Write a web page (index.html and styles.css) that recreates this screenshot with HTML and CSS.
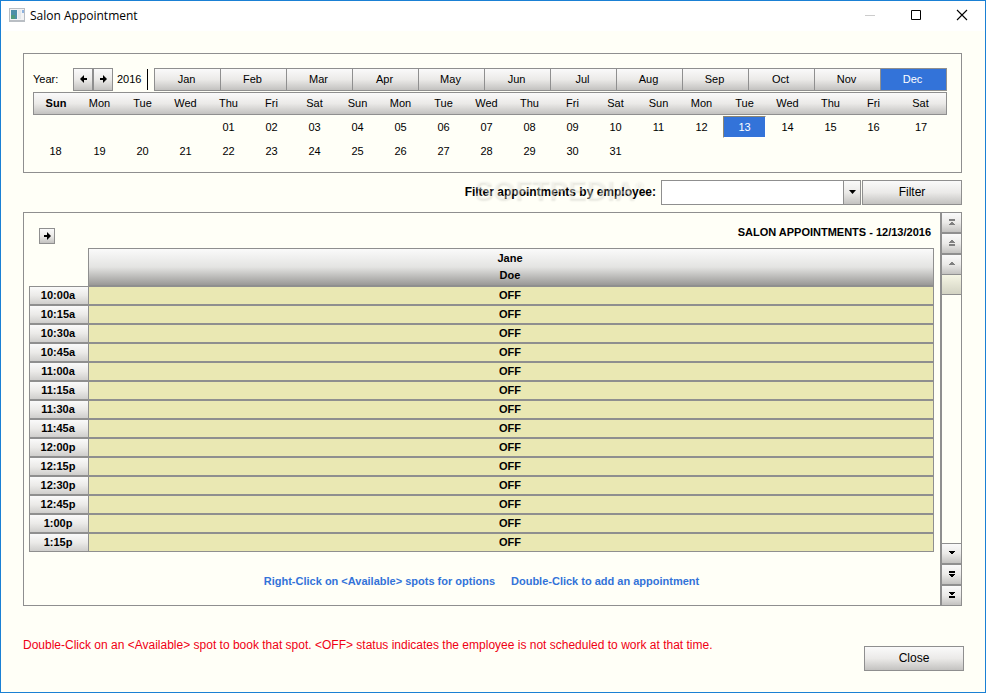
FILE: index.html
```html
<!DOCTYPE html>
<html lang="en">
<head>
  <meta charset="UTF-8">
  <meta name="viewport" content="width=device-width, initial-scale=1.0">
  <title>Salon Appointment</title>
  <link rel="stylesheet" href="styles.css">
</head>
<body>
<div class="window">

  <header class="titlebar">
    <svg class="app-icon" width="16" height="14" viewBox="0 0 16 14" shape-rendering="crispEdges">
      <rect width="16" height="14" fill="#b9bec4"/>
      <rect x="1" y="1" width="14" height="11" fill="#f2f3f5"/>
      <rect x="2" y="2" width="6" height="9" fill="#4d8fa8"/>
      <rect x="2" y="7" width="4" height="4" fill="#4f9a7c"/>
      <rect x="9" y="2" width="3" height="9" fill="#e4e8ec"/>
      <rect x="13" y="2" width="2" height="3" fill="#8fb3e0"/>
    </svg>
    <h1>Salon Appointment</h1>
    <div class="window-buttons">
      <button type="button" aria-label="Minimize" disabled>
        <svg width="12" height="12" viewBox="0 0 12 12"><path d="M1 6.500h10" stroke="#ccc"/></svg>
      </button>
      <button type="button" aria-label="Maximize">
        <svg width="12" height="12" viewBox="0 0 12 12"><path d="M1.500 1.500h9v9h-9z" fill="none" stroke="#000"/></svg>
      </button>
      <button type="button" aria-label="Close window">
        <svg width="12" height="12" viewBox="0 0 12 12"><path d="M1 1l10 10M11 1L1 11" stroke="#000" stroke-width="1.100"/></svg>
      </button>
    </div>
  </header>

  <main class="content">

    <section class="calendar">
      <div class="calendar-top">
        <span class="year-label">Year:</span>
        <div class="year-nav">
          <button type="button" aria-label="Previous year"><svg width="7" height="8" viewBox="0 0 7 8"><path d="M0 4L4 0v3h3v2H4v3z"/></svg></button>
          <button type="button" aria-label="Next year"><svg width="7" height="8" viewBox="0 0 7 8"><path d="M7 4L3 0v3H0v2h3v3z"/></svg></button>
        </div>
        <span class="year">2016</span>
        <div class="months">
          <button type="button">Jan</button>
          <button type="button">Feb</button>
          <button type="button">Mar</button>
          <button type="button">Apr</button>
          <button type="button">May</button>
          <button type="button">Jun</button>
          <button type="button">Jul</button>
          <button type="button">Aug</button>
          <button type="button">Sep</button>
          <button type="button">Oct</button>
          <button type="button">Nov</button>
          <button type="button" class="selected">Dec</button>
        </div>
      </div>

      <table class="days">
        <colgroup><col class="col-first"><col span="19" class="col-day"><col class="col-last"></colgroup>
        <thead><tr id="weekdays"></tr></thead>
        <tbody id="days"></tbody>
      </table>
    </section>

    <form class="filter">
      <label for="employee">Filter appointments by employee:</label>
      <span class="watermark" aria-hidden="true">SOFTPEDIA<sup>®</sup></span>
      <div class="select-box">
        <select id="employee"><option></option></select>
        <span class="select-arrow"><svg width="7" height="4" viewBox="0 0 7 4"><path d="M0 0h7L3.500 4z"/></svg></span>
      </div>
      <button type="button">Filter</button>
    </form>

    <section class="schedule">
      <div class="schedule-body">
        <div class="schedule-top">
          <button type="button" aria-label="Next employees"><svg width="7" height="8" viewBox="0 0 7 8"><path d="M7 4L3 0v3H0v2h3v3z"/></svg></button>
          <h2>SALON APPOINTMENTS - 12/13/2016</h2>
        </div>
        <table class="slots">
          <colgroup><col class="col-time"><col></colgroup>
          <thead><tr><td></td><th scope="col">Jane<br>Doe</th></tr></thead>
          <tbody id="slots"></tbody>
        </table>
        <p class="hints"><span>Right-Click on &lt;Available&gt; spots for options</span><span>Double-Click to add an appointment</span></p>
      </div>

      <div class="scrollbar">
        <button type="button" aria-label="Scroll to top" disabled><svg width="6" height="6" viewBox="0 0 6 6"><path d="M0 0h6v2H0zM2 3h2v1h1v1h1v1H0V5h1V4h1z"/></svg></button>
        <button type="button" aria-label="Page up" disabled><svg width="6" height="6" viewBox="0 0 6 6"><path d="M2 0h2v1h1v1h1v1H0V2h1V1h1zM0 4h6v2H0z"/></svg></button>
        <button type="button" aria-label="Scroll up" disabled><svg width="6" height="3" viewBox="0 0 6 3"><path d="M2 0h2v1h1v1h1v1H0V2h1V1h1z"/></svg></button>
        <div class="track"><div class="thumb"></div></div>
        <button type="button" aria-label="Scroll down"><svg width="6" height="3" viewBox="0 0 6 3"><path d="M0 0h6v1H5v1H4v1H2V2H1V1H0z"/></svg></button>
        <button type="button" aria-label="Page down"><svg width="6" height="6" viewBox="0 0 6 6"><path d="M0 0h6v2H0zM0 3h6v1H5v1H4v1H2V5H1V4H0z"/></svg></button>
        <button type="button" aria-label="Scroll to bottom"><svg width="6" height="6" viewBox="0 0 6 6"><path d="M0 0h6v1H5v1H4v1H2V2H1V1H0zM0 4h6v2H0z"/></svg></button>
      </div>
    </section>

    <footer class="footer">
      <p>Double-Click on an &lt;Available&gt; spot to book that spot. &lt;OFF&gt; status indicates the employee is not scheduled to work at that time.</p>
      <button type="button">Close</button>
    </footer>

  </main>
</div>

<script>
  const weekdays = ['Sun', 'Mon', 'Tue', 'Wed', 'Thu', 'Fri', 'Sat'];
  const columns = 21;
  const firstDay = 4; // Dec 2016 starts on a Thursday
  const selectedDay = 13;

  let head = '';
  for (let i = 0; i < columns; i++) {
    head += '<th scope="col">' + weekdays[i % 7] + '</th>';
  }
  document.getElementById('weekdays').innerHTML = head;

  let days = '';
  for (let i = 0; i < columns * 2; i++) {
    const day = i - firstDay + 1;
    if (i % columns === 0) days += '<tr>';
    if (day < 1 || day > 31) {
      days += '<td></td>';
    } else {
      const cls = day === selectedDay ? ' class="selected"' : '';
      days += '<td><button type="button"' + cls + '>' + String(day).padStart(2, '0') + '</button></td>';
    }
    if (i % columns === columns - 1) days += '</tr>';
  }
  document.getElementById('days').innerHTML = days;

  // 15 minute slots, 10:00a to 1:15p
  let slots = '';
  for (let t = 600; t <= 795; t += 15) {
    const hour = Math.floor(t / 60);
    const label = (hour > 12 ? hour - 12 : hour) + ':' + String(t % 60).padStart(2, '0') + (hour < 12 ? 'a' : 'p');
    slots += '<tr><th scope="row">' + label + '</th><td>OFF</td></tr>';
  }
  document.getElementById('slots').innerHTML = slots;
</script>
</body>
</html>
```
FILE: styles.css
```css
* {
  box-sizing: border-box;
}
body {
  margin: 0;
  background-color: #fffff7;
  color: #000;
  font-family: "Liberation Sans", Arial, sans-serif;
  font-size: 11px;
}
button {
  padding: 0 0 2px;
  border: 1px solid #8f8f8f;
  background: linear-gradient(#fafafa, #ebeae8 50%, #c3c2c0);
  color: #000;
  font-family: inherit;
  font-size: 11px;
}
svg {
  display: block;
  margin: auto;
}
h1, h2, p {
  margin: 0;
}
table {
  width: 100%;
  table-layout: fixed;
  border-collapse: separate;
  border-spacing: 0;
}
th, td {
  padding: 0;
  text-align: center;
}

.window {
  display: flex;
  flex-direction: column;
  min-height: 100vh;
  border: 1px solid #1a80d4;
}

/* title bar */
.titlebar {
  display: flex;
  align-items: center;
  height: 30px;
  padding: 0 0 2px 8px;
  background-color: #fff;
}
.app-icon {
  margin: 0 5px 0 0;
}
.titlebar h1 {
  flex: 1;
  font-family: "Open Sans", "Noto Sans", sans-serif;
  font-size: 12px;
  font-weight: normal;
}
.window-buttons {
  display: flex;
}
.window-buttons button {
  width: 46px;
  height: 28px;
  padding: 0;
  border: 0;
  background: none;
}

.content {
  display: flex;
  flex: 1;
  flex-direction: column;
  padding: 22px 0 21px;
}

/* calendar */
.calendar {
  height: 120px;
  margin: 0 23px 0 22px;
  padding: 14px 14px 0 9px;
  border: 1px solid #8f8f8f;
}
.calendar-top {
  display: flex;
  align-items: center;
  margin-bottom: 1px;
}
.year-label {
  width: 40px;
  line-height: 21px;
}
.year-nav {
  display: flex;
}
.year-nav button {
  width: 20px;
  height: 23px;
}
.year {
  width: 35px;
  margin-right: 6px;
  padding-left: 4px;
  border-right: 1px solid #000;
  line-height: 21px;
}
.months {
  display: flex;
  flex: 1;
  border-right: 1px solid #8f8f8f;
}
.months button {
  flex: 1;
  height: 23px;
  padding-right: 2px;
  border-right: 0;
}
.months .selected,
.days .selected {
  background: #3373d9;
  color: #fff;
}
.col-first {
  width: 45px;
}
.col-day {
  width: 43px;
}
.col-last {
  width: 52px;
}
.days th {
  height: 23px;
  padding-bottom: 2px;
  border: solid #8f8f8f;
  border-width: 1px 0;
  background: linear-gradient(#fafafa, #ebeae8 50%, #c3c2c0);
  font-weight: normal;
}
.days th:first-child {
  border-left-width: 1px;
  font-weight: bold;
}
.days th:last-child {
  border-right-width: 1px;
}
.days td {
  height: 24px;
}
.days button {
  width: 100%;
  height: 22px;
  padding: 0;
  border: 0;
  background: none;
}
.days .selected {
  border: 1px solid;
  border-color: #8c8674 #fff #fff #8c8674;
}

/* filter row */
.filter {
  position: relative;
  display: flex;
  align-items: center;
  justify-content: flex-end;
  margin: 7px 23px 7px 22px;
}
.filter label {
  margin-right: 5px;
  padding-bottom: 2px;
  font-size: 12px;
  font-weight: bold;
}
.filter > button {
  width: 100px;
  height: 25px;
  font-size: 12px;
}
.watermark {
  position: absolute;
  top: -6px;
  right: 319px;
  color: rgba(255, 255, 250, 0.4);
  font-size: 28px;
  font-weight: bold;
  line-height: 32px;
  text-shadow: 1px 2px 2px rgba(0, 0, 0, 0.09);
  pointer-events: none;
}
.watermark sup {
  font-size: 12px;
  line-height: 0;
}
.select-box {
  position: relative;
  width: 200px;
  margin-right: 1px;
}
.select-box select {
  display: block;
  width: 100%;
  height: 25px;
  border: 1px solid #8f8f8f;
  border-radius: 0;
  background-color: #fff;
  appearance: none;
}
.select-arrow {
  position: absolute;
  top: 0;
  right: 0;
  display: flex;
  width: 18px;
  height: 25px;
  padding-bottom: 2px;
  border: 1px solid #8f8f8f;
  background: linear-gradient(#fafafa, #ebeae8 50%, #c3c2c0);
  pointer-events: none;
}

/* schedule */
.schedule {
  display: flex;
  margin: 0 23px 0 22px;
}
.schedule-body {
  flex: 1;
  padding: 15px 6px 18px 5px;
  border: 1px solid #8f8f8f;
}
.schedule-top {
  display: flex;
  justify-content: space-between;
  margin-bottom: 4px;
  padding: 0 3px 0 10px;
}
.schedule-top button {
  width: 16px;
  height: 16px;
  padding: 0;
}
.schedule-top h2 {
  font-size: 11px;
  line-height: 8px;
}
.col-time {
  width: 59px;
}
.slots thead th {
  height: 38px;
  border: 1px solid #8f8f8f;
  background: linear-gradient(#fafafa, #e4e4e2 50%, #9a9997);
  line-height: 17px;
}
.slots tbody th,
.slots tbody td {
  height: 19px;
  border: 1px solid #8f8f8f;
  font-weight: bold;
  line-height: 17px;
}
.slots tbody th {
  border-right: 0;
  background: linear-gradient(#fafafa, #ebeae8 50%, #cfcecc);
}
.slots tbody td {
  background-color: #eae8b3;
}
.slots th,
.slots tbody td {
  padding-right: 2px;
}
.hints {
  display: flex;
  justify-content: center;
  gap: 16px;
  margin-top: 23px;
  color: #3373d9;
  font-weight: bold;
}

/* scroll bar */
.scrollbar {
  display: flex;
  flex-direction: column;
  width: 21px;
}
.scrollbar button {
  height: 21px;
}
.scrollbar svg {
  fill: #000;
  shape-rendering: crispEdges;
}
.scrollbar button:disabled svg {
  fill: #808080;
}
.track {
  flex: 1;
  border: solid #8f8f8f;
  border-width: 0 1px;
}
.thumb {
  height: 20px;
  border-bottom: 1px solid #8f8f8f;
  background: linear-gradient(#f5f5e4, #d3d3c3);
}

.footer {
  display: flex;
  justify-content: space-between;
  align-items: flex-end;
  margin-top: auto;
  padding: 0 21px 0 22px;
}
.footer p {
  align-self: flex-start;
  margin-top: -8px;
  color: #f00014;
  font-size: 12px;
}
.footer button {
  width: 100px;
  height: 25px;
  font-size: 12px;
}
```
